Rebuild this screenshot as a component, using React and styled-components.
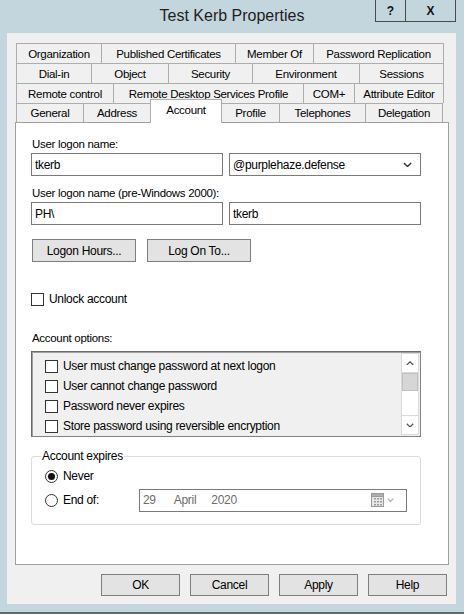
import React from 'react';
import styled, { createGlobalStyle } from 'styled-components';

const GlobalStyle = createGlobalStyle`
  html, body {
    margin: 0;
    padding: 0;
    background: #c3d6de;
  }
  body {
    font-family: "Liberation Sans", Arial, sans-serif;
    font-size: 11.5px;
    letter-spacing: -0.3px;
    color: #000;
  }
`;

const tabRows = [
  [['Organization', 85], ['Published Certificates', 134], ['Member Of', 78], ['Password Replication', 131]],
  [['Dial-in', 75], ['Object', 77], ['Security', 84], ['Environment', 107], ['Sessions', 85]],
  [['Remote control', 97], ['Remote Desktop Services Profile', 190], ['COM+', 51], ['Attribute Editor', 90]],
  [['General', 67], ['Address', 67], ['Account', 72], ['Profile', 58], ['Telephones', 86], ['Delegation', 78]],
];

const accountOptions = [
  'User must change password at next logon',
  'User cannot change password',
  'Password never expires',
  'Store password using reversible encryption',
];

const Window = styled.div`
  width: 464px;
  height: 614px;
  display: flex;
  flex-direction: column;
  background: #c3d6de;
  border-bottom: 2px solid #5d6a70;
  box-sizing: border-box;
`;

const TitleBar = styled.div`
  height: 33px;
  display: grid;
  grid-template-columns: 1fr auto 1fr;
  align-items: start;
`;

const Title = styled.div`
  font-size: 16px;
  letter-spacing: 0;
  color: #1e1e1e;
  padding-top: 7px;
`;

const CaptionButtons = styled.div`
  display: flex;
  justify-content: flex-end;
  padding-right: 8px;
`;

const CaptionButton = styled.div`
  width: ${(p) => p.w}px;
  height: 22px;
  box-sizing: border-box;
  border: 1px solid #4a4a4a;
  border-top: none;
  border-left: ${(p) => (p.first ? '1px solid #4a4a4a' : 'none')};
  display: flex;
  align-items: center;
  justify-content: center;
  font-weight: bold;
  font-size: 12px;
  letter-spacing: 0;
  color: #111;
`;

const DialogBody = styled.div`
  margin: 0 8px 0 7px;
  height: 571px;
  background: #f0f0f0;
  display: flex;
  flex-direction: column;
  padding-top: 10px;
  box-sizing: border-box;
`;

const TabStrip = styled.div`
  margin-left: 9px;
  display: flex;
  flex-direction: column;
`;

const TabRow = styled.div`
  display: flex;
  height: ${(p) => p.h}px;
  align-items: flex-end;
`;

const Tab = styled.div`
  width: ${(p) => p.w}px;
  height: ${(p) => p.h}px;
  box-sizing: border-box;
  border-top: 1px solid #adadad;
  border-left: 1px solid #adadad;
  border-right: ${(p) => (p.last ? '1px solid #adadad' : 'none')};
  background: #f0f0f0;
  display: flex;
  align-items: center;
  justify-content: center;
  white-space: nowrap;
  ${(p) => p.selected && `
    height: 24px;
    margin-bottom: -1px;
    background: #fff;
    border-right: 1px solid #adadad;
    margin-right: -1px;
    position: relative;
    z-index: 1;
    align-items: flex-start;
    padding-top: 4px;
  `}
`;

const TabPanel = styled.div`
  margin-left: 8px;
  width: 434px;
  height: 443px;
  box-sizing: border-box;
  background: #fff;
  border: 1px solid #a0a0a0;
  padding: 14px 0 0 15px;
  display: flex;
  flex-direction: column;
`;

const FieldLabel = styled.div`
  line-height: 15px;
  margin-left: 1px;
  margin-top: ${(p) => p.mt || 0}px;
`;

const InputRow = styled.div`
  display: grid;
  grid-template-columns: 192px 192px;
  gap: 6px;
  margin-top: 1px;
`;

const TextBox = styled.div`
  height: 23px;
  box-sizing: border-box;
  border: 1px solid #7a7a7a;
  background: #fff;
  display: flex;
  align-items: center;
  justify-content: space-between;
  padding: 0 8px 0 3px;
  font-size: 12px;
`;

const ButtonRow = styled.div`
  display: flex;
  gap: ${(p) => p.gap}px;
  margin-top: ${(p) => p.mt || 0}px;
  margin-left: ${(p) => p.ml || 0}px;
`;

const PushButton = styled.div`
  width: ${(p) => p.w}px;
  height: ${(p) => p.h || 23}px;
  box-sizing: border-box;
  border: 1px solid #7e7e7e;
  background: #e3e3e3;
  display: flex;
  align-items: center;
  justify-content: center;
  font-size: 12px;
`;

const CheckRow = styled.div`
  display: flex;
  align-items: center;
  gap: 5px;
  height: ${(p) => p.h || 20}px;
  margin-top: ${(p) => p.mt || 0}px;
  font-size: 12px;
`;

const CheckBox = styled.div`
  width: 13px;
  height: 13px;
  box-sizing: border-box;
  border: 1px solid #333;
  background: #fff;
  flex-shrink: 0;
`;

const ListBox = styled.div`
  margin-top: 5px;
  width: 390px;
  height: 86px;
  box-sizing: border-box;
  border: 1px solid #828282;
  border-top-color: #6a6a6a;
  border-left-color: #6a6a6a;
  box-shadow: inset 1px 1px 0 #a0a0a0;
  background: #f0f0f0;
  display: flex;
  justify-content: space-between;
`;

const ListItems = styled.div`
  padding-top: 4px;
  padding-left: 13px;
  display: flex;
  flex-direction: column;
`;

const ScrollBar = styled.div`
  width: 18px;
  margin: 1px 1px 1px 0;
  box-sizing: border-box;
  border: 1px solid #dadada;
  background: #fff;
  display: flex;
  flex-direction: column;
`;

const ScrollArrow = styled.div`
  height: 18px;
  display: flex;
  align-items: center;
  justify-content: center;
  border-${(p) => (p.up ? 'bottom' : 'top')}: 1px solid #dadada;
`;

const ScrollThumb = styled.div`
  height: 18px;
  background: #d6d6d6;
  border: 1px solid #c2c2c2;
  box-sizing: border-box;
`;

const ScrollTrack = styled.div`
  flex: 1;
`;

const GroupBox = styled.fieldset`
  margin: 12px 0 0 0;
  width: 390px;
  height: 76px;
  box-sizing: border-box;
  border: 1px solid #dcdcdc;
  border-radius: 3px;
  padding: 1px 12px 0 13px;
  display: flex;
  flex-direction: column;
`;

const Legend = styled.legend`
  padding: 0 1px;
  margin-left: -4px;
  font-size: 12px;
`;

const RadioRow = styled.div`
  display: flex;
  align-items: center;
  height: 24px;
  font-size: 12px;
`;

const RadioLabel = styled.div`
  display: flex;
  align-items: center;
  gap: 5px;
  width: 94px;
  flex-shrink: 0;
`;

const Radio = styled.div`
  width: 13px;
  height: 13px;
  box-sizing: border-box;
  border: 1px solid #333;
  border-radius: 50%;
  background: #fff;
  display: flex;
  align-items: center;
  justify-content: center;
  &::after {
    content: '';
    display: ${(p) => (p.checked ? 'block' : 'none')};
    width: 7px;
    height: 7px;
    border-radius: 50%;
    background: #111;
  }
`;

const DatePicker = styled.div`
  width: 268px;
  height: 23px;
  box-sizing: border-box;
  border: 1px solid #7a7a7a;
  background: #fff;
  display: flex;
  align-items: center;
  padding: 0 12px 0 3px;
  color: #6d6d6d;
`;

const DatePart = styled.span`
  margin-right: ${(p) => p.gap}px;
`;

const DateIcon = styled.div`
  margin-left: auto;
  display: flex;
  align-items: center;
  gap: 2px;
`;

const DialogButtons = styled.div`
  display: flex;
  justify-content: flex-end;
  gap: 10px;
  padding: 9px 9px 0 0;
`;

const Chevron = ({ up, size = 9, color = '#333' }) => (
  <svg width={size} height={size * 0.6} viewBox="0 0 10 6">
    <polyline
      points={up ? '1,5 5,1 9,5' : '1,1 5,5 9,1'}
      fill="none"
      stroke={color}
      strokeWidth="1.6"
    />
  </svg>
);

const CalendarGlyph = () => (
  <svg width="14" height="14" viewBox="0 0 14 14">
    <rect x="0.5" y="0.5" width="12" height="13" fill="#e8e8e8" stroke="#9a9a9a" />
    <rect x="0.5" y="0.5" width="12" height="3" fill="#b0b0b0" stroke="#9a9a9a" />
    {[3, 6, 9].map((x) => [6, 9, 12].map((y) => (
      <rect key={`${x}-${y}`} x={x} y={y - 1} width="2" height="1.5" fill="#9a9a9a" />
    )))}
  </svg>
);

const App = () => (
  <>
    <GlobalStyle />
    <Window>
      <TitleBar>
        <span />
        <Title>Test Kerb Properties</Title>
        <CaptionButtons>
          <CaptionButton w={31} first>?</CaptionButton>
          <CaptionButton w={50}>X</CaptionButton>
        </CaptionButtons>
      </TitleBar>

      <DialogBody>
        <TabStrip>
          {tabRows.map((row, r) => (
            <TabRow key={r} h={r === 3 ? 19 : 20}>
              {row.map(([name, w], i) => (
                <Tab
                  key={name}
                  w={w}
                  h={r === 3 ? 19 : 20}
                  last={i === row.length - 1}
                  selected={name === 'Account'}
                >
                  {name}
                </Tab>
              ))}
            </TabRow>
          ))}
        </TabStrip>

        <TabPanel>
          <FieldLabel>User logon name:</FieldLabel>
          <InputRow>
            <TextBox>tkerb</TextBox>
            <TextBox>
              @purplehaze.defense
              <Chevron />
            </TextBox>
          </InputRow>

          <FieldLabel mt={10}>User logon name (pre-Windows 2000):</FieldLabel>
          <InputRow>
            <TextBox>PH\</TextBox>
            <TextBox>tkerb</TextBox>
          </InputRow>

          <ButtonRow gap={11} mt={14} ml={1}>
            <PushButton w={104}>Logon Hours...</PushButton>
            <PushButton w={104}>Log On To...</PushButton>
          </ButtonRow>

          <CheckRow mt={27}>
            <CheckBox />
            Unlock account
          </CheckRow>

          <FieldLabel mt={22}>Account options:</FieldLabel>
          <ListBox>
            <ListItems>
              {accountOptions.map((opt) => (
                <CheckRow key={opt} h={20}>
                  <CheckBox />
                  {opt}
                </CheckRow>
              ))}
            </ListItems>
            <ScrollBar>
              <ScrollArrow up>
                <Chevron up size={8} color="#555" />
              </ScrollArrow>
              <ScrollThumb />
              <ScrollTrack />
              <ScrollArrow>
                <Chevron size={8} color="#555" />
              </ScrollArrow>
            </ScrollBar>
          </ListBox>

          <GroupBox>
            <Legend>Account expires</Legend>
            <RadioRow>
              <RadioLabel>
                <Radio checked />
                Never
              </RadioLabel>
            </RadioRow>
            <RadioRow>
              <RadioLabel>
                <Radio />
                End of:
              </RadioLabel>
              <DatePicker>
                <DatePart gap={18}>29</DatePart>
                <DatePart gap={15}>April</DatePart>
                <DatePart gap={0}>2020</DatePart>
                <DateIcon>
                  <CalendarGlyph />
                  <Chevron size={7} color="#aaa" />
                </DateIcon>
              </DatePicker>
            </RadioRow>
          </GroupBox>
        </TabPanel>

        <DialogButtons>
          <PushButton w={79} h={22}>OK</PushButton>
          <PushButton w={79} h={22}>Cancel</PushButton>
          <PushButton w={79} h={22}>Apply</PushButton>
          <PushButton w={79} h={22}>Help</PushButton>
        </DialogButtons>
      </DialogBody>
    </Window>
  </>
);

export default App;
